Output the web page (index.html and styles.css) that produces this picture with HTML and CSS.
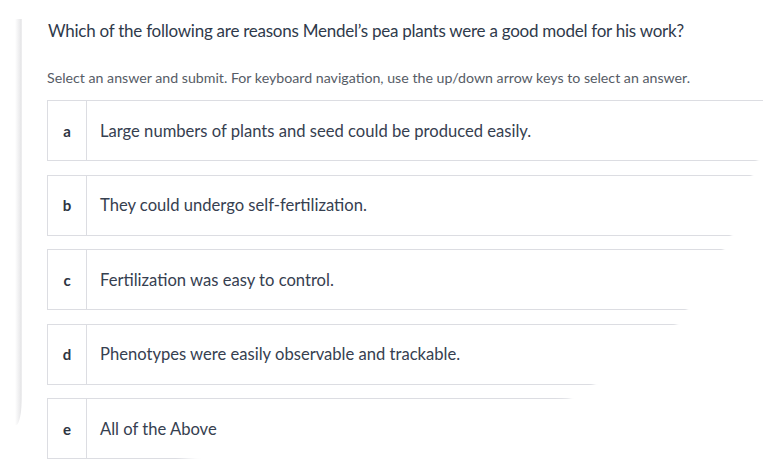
FILE: index.html
```html
<!DOCTYPE html>
<html>
<head>
<meta charset="utf-8">
<link rel="stylesheet" href="styles.css">
</head>
<body>
<div class="card">
  <div class="rail"></div>
  <div class="content">
    <h1 class="question">Which of the following are reasons Mendel’s pea plants were a good model for his work?</h1>
    <p class="hint">Select an answer and submit. For keyboard navigation, use the up/down arrow keys to select an answer.</p>
    <ul class="options">
      <li class="option"><span class="key">a</span><span class="label">Large numbers of plants and seed could be produced easily.</span></li>
      <li class="option"><span class="key">b</span><span class="label">They could undergo self-fertilization.</span></li>
      <li class="option"><span class="key">c</span><span class="label">Fertilization was easy to control.</span></li>
      <li class="option"><span class="key">d</span><span class="label">Phenotypes were easily observable and trackable.</span></li>
      <li class="option"><span class="key">e</span><span class="label">All of the Above</span></li>
    </ul>
  </div>
</div>
<svg class="fade" width="763" height="470" viewBox="0 0 763 470" aria-hidden="true">
  <defs>
    <filter id="soft" x="-5%" y="-5%" width="110%" height="110%"><feGaussianBlur stdDeviation="1.2"/></filter>
  </defs>
  <path filter="url(#soft)" fill="#fff" d="M770 90 L764 152 L756 162 L752 175 L731 236 L723 250 L686 311 L677 324 L593 385 L568 399 L300 440 L178 460 L140 480 L800 480 Z"/>
</svg>
</body>
</html>
```
FILE: styles.css
```css
html, body {
  margin: 0;
  padding: 0;
  background: #fff;
  overflow: hidden;
  width: 763px;
  height: 470px;
}
body {
  font-family: "Lato", "Liberation Sans", sans-serif;
  color: #333c4b;
  position: relative;
}
.card {
  display: flex;
  align-items: flex-start;
  padding: 19px 0 0 15px;
}
.rail {
  width: 7px;
  height: 406px;
  flex: none;
  background: linear-gradient(to right, rgba(255,255,255,0), #e6e6e8 85%, #f1f1f2);
  border-bottom-right-radius: 6px 30px;
}
.content {
  flex: none;
  width: 740px;
  padding-left: 25px;
}
.question {
  margin: 1px 0 0 1px;
  font-size: 17px;
  letter-spacing: -0.25px;
  font-weight: 400;
  line-height: 22px;
  color: #2f3a4b;
}
.hint {
  margin: 26.5px 0 0 0;
  font-size: 14.2px;
  line-height: 18px;
  color: #565c66;
}
.options {
  list-style: none;
  margin: 13.5px 0 0 0;
  padding: 0;
  display: flex;
  flex-direction: column;
  gap: 13.5px;
}
.option {
  display: flex;
  align-items: center;
  height: 61px;
  box-sizing: border-box;
  border: 1px solid #dcdde2;
  border-right: none;
  width: 740px;
}
.key {
  align-self: stretch;
  display: flex;
  align-items: center;
  justify-content: center;
  width: 38px;
  flex: none;
  border-right: 1px solid #dcdde2;
  font-weight: 700;
  font-size: 15px;
  color: #2d3542;
}
.label {
  padding-left: 13px;
  font-size: 16.6px;
  color: #364050;
}
.fade {
  position: absolute;
  left: 0;
  top: 0;
  pointer-events: none;
}
```
